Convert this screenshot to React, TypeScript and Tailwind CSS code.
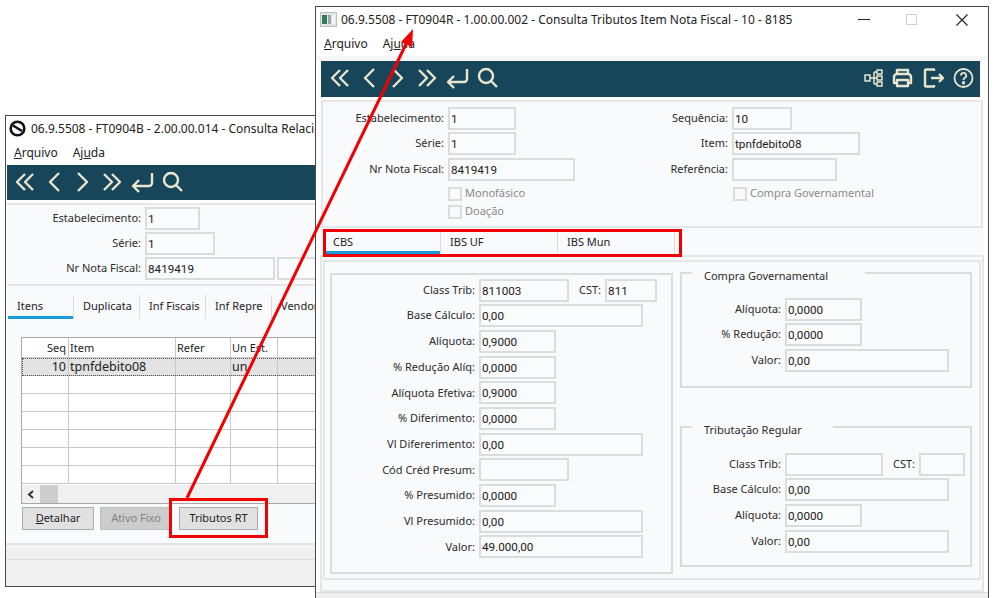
import type { ReactNode } from 'react';

const ICON = '#e9e6cf';

const ToolIcon = ({ w = 22, children }: { w?: number; children: ReactNode }) => (
  <svg
    width={w}
    height="24"
    viewBox={`0 0 ${w} 24`}
    fill="none"
    stroke={ICON}
    strokeWidth="2.4"
    strokeLinejoin="round"
    className="shrink-0"
  >
    {children}
  </svg>
);

const NavIcons = () => (
  <>
    <ToolIcon w={19}>
      <path d="M10 4 2 12l8 8M18 4l-8 8 8 8" />
    </ToolIcon>
    <span className="w-[13px]" />
    <ToolIcon w={14}>
      <path d="M12 3 3 12l9 9" />
    </ToolIcon>
    <span className="w-[15px]" />
    <ToolIcon w={14}>
      <path d="m2 3 9 9-9 9" />
    </ToolIcon>
    <span className="w-[12px]" />
    <ToolIcon w={20}>
      <path d="m2 4 8 8-8 8M10 4l8 8-8 8" />
    </ToolIcon>
    <span className="w-[8px]" />
    <ToolIcon w={24}>
      <path d="M22 3v10a3 3 0 0 1-3 3H3M9 10l-6 6 6 6" />
    </ToolIcon>
    <span className="w-[8px]" />
    <ToolIcon w={21}>
      <circle cx="9" cy="10" r="7" />
      <path d="m14 15 6 6" />
    </ToolIcon>
  </>
);

const Input = ({ value = '', className }: { value?: string; className: string }) => (
  <div
    className={`h-[23px] shrink-0 overflow-hidden border-2 border-[#dcdcdc] bg-[#fafbfd] pl-[1px] font-['Roboto',sans-serif] text-[11.7px] leading-[20px] text-[#1a1a1a] ${className}`}
  >
    {value}
  </div>
);

const Row = ({
  label,
  labelClass,
  children,
}: {
  label: string;
  labelClass: string;
  children: ReactNode;
}) => (
  <div className="flex h-[22px] items-center">
    <span className={`shrink-0 pr-1 text-right text-[11px] text-[#2b2b2b] ${labelClass}`}>{label}</span>
    {children}
  </div>
);

const Check = ({ label }: { label: string }) => (
  <div className="flex h-[14px] items-center">
    <span className="h-[14px] w-[14px] border-2 border-[#dcdcdc]" />
    <span className="ml-[3px] text-[11px] text-[#8a8a8a]">{label}</span>
  </div>
);

const Mnemonic = ({ before, ch, after }: { before: string; ch: string; after: string }) => (
  <span>
    {before}
    <span className="underline">{ch}</span>
    {after}
  </span>
);

const MenuBar = ({ className }: { className: string }) => (
  <div className={`flex h-[24px] shrink-0 items-center gap-[15px] bg-white text-[12px] text-[#222] ${className}`}>
    <Mnemonic before="" ch="A" after="rquivo" />
    <Mnemonic before="Aj" ch="u" after="da" />
  </div>
);

const LeftGridRow = ({
  cells,
  selected,
  header,
}: {
  cells: string[];
  selected?: boolean;
  header?: boolean;
}) => (
  <div
    className={`flex shrink-0 border-b border-[#c8c8c8] ${
      header ? 'h-[20px] text-[11px] leading-[20px]' : 'h-[18px] text-[12.5px] leading-[17px]'
    } ${selected ? 'bg-[#e3e3e3] outline-1 -outline-offset-1 outline-dotted outline-[#555]' : ''}`}
  >
    <div className="w-[47px] shrink-0 border-r border-[#c8c8c8] pr-[2px] text-right">{cells[0]}</div>
    <div className="w-[107px] shrink-0 border-r border-[#c8c8c8] pl-[1px]">{cells[1]}</div>
    <div className="w-[55px] shrink-0 border-r border-[#c8c8c8] pl-[1px]">{cells[2]}</div>
    <div className="w-[47px] shrink-0 border-r border-[#c8c8c8] pl-[1px]">{cells[3]}</div>
  </div>
);

const LeftWindow = () => (
  <div className="absolute left-[5px] top-[115px] flex h-[472px] w-[320px] flex-col overflow-hidden border border-[#4a4a4a] bg-white">
    <div className="flex h-[25px] shrink-0 items-center pl-[3px] text-[12px] whitespace-nowrap text-[#222]">
      <svg width="17" height="17" viewBox="0 0 17 17" fill="none" className="mr-[5px] shrink-0">
        <circle cx="8.5" cy="8.5" r="6.8" stroke="#111" strokeWidth="2.6" />
        <path d="M4 5.5 13 11" stroke="#111" strokeWidth="2.6" />
      </svg>
      06.9.5508 - FT0904B - 2.00.00.014 - Consulta Relacionamento
    </div>
    <MenuBar className="pl-[8px]" />
    <div className="ml-[1px] flex h-[35px] shrink-0 items-center bg-[#17465a] pb-[2px] pl-[8px]">
      <NavIcons />
    </div>
    <div className="mx-[1px] mt-[3px] flex flex-1 flex-col bg-[#f9fafc]">
      <div className="flex h-[83px] shrink-0 flex-col gap-[3px] border-y-2 border-[#e6e6e6] pt-[2px]">
        <Row label="Estabelecimento:" labelClass="w-[138px]">
          <Input value="1" className="w-[55px]" />
        </Row>
        <Row label="Série:" labelClass="w-[138px]">
          <Input value="1" className="w-[70px]" />
        </Row>
        <Row label="Nr Nota Fiscal:" labelClass="w-[138px]">
          <Input value="8419419" className="w-[130px]" />
          <Input className="ml-[2px] w-[60px]" />
        </Row>
      </div>
      <div className="ml-[1px] flex h-[33px] shrink-0 items-end text-[11px] text-[#222]">
        {['Itens', 'Duplicata', 'Inf Fiscais', 'Inf Repre', 'Vendor'].map((tab, i) => (
          <div
            key={tab}
            className="relative h-[24px] w-[66px] shrink-0 overflow-hidden border-r border-[#dcdcdc] pl-[9px] pt-[3px] leading-[16px] whitespace-nowrap"
          >
            {tab}
            {i === 0 && <span className="absolute bottom-0 left-0 h-[3px] w-full bg-[#1a9ad8]" />}
          </div>
        ))}
      </div>
      <div className="ml-[14px] mt-[18px] flex h-[167px] w-[300px] shrink-0 flex-col border border-[#a8a8a8] bg-white text-[#222]">
        <LeftGridRow header cells={['Seq', 'Item', 'Refer', 'Un Est.']} />
        <LeftGridRow cells={['10', 'tpnfdebito08', '', 'un']} selected />
        {[0, 1, 2, 3, 4, 5].map((n) => (
          <LeftGridRow key={n} cells={['', '', '', '']} />
        ))}
        <div className="mt-[1px] flex flex-1 items-center bg-[#f0f0f0]">
          <svg width="18" height="17" viewBox="0 0 18 17" fill="none">
            <path d="M11 5 7 8.5l4 3.5" stroke="#333" strokeWidth="2" />
          </svg>
          <span className="h-full w-[18px] bg-[#cdcdcd]" />
        </div>
      </div>
      <div className="ml-[15px] mt-[3px] flex gap-[6px] text-[11px]">
        <div className="flex h-[23px] w-[72px] items-center justify-center border border-[#adadad] bg-[#e1e1e1] text-[#222]">
          <Mnemonic before="" ch="D" after="etalhar" />
        </div>
        <div className="flex h-[23px] w-[72px] items-center justify-center border border-[#bfbfbf] bg-[#cccccc] text-[#838383]">
          Ativo Fixo
        </div>
        <div className="ml-[1px] flex h-[23px] w-[79px] items-center justify-center border border-[#adadad] bg-[#e1e1e1] text-[#222]">
          Tributos RT
        </div>
      </div>
    </div>
    <div className="h-[6px] shrink-0 border-t-2 border-[#e2e2e2] bg-[#f4f4f4]" />
    <div className="h-[10px] shrink-0 bg-[#f0f0f0]" />
    <div className="h-[27px] shrink-0 border-t border-[#dcdcdc] bg-[#f0f0f0]" />
  </div>
);

const Fieldset = ({
  legend,
  legendClass,
  className,
  children,
}: {
  legend: string;
  legendClass: string;
  className: string;
  children: ReactNode;
}) => (
  <fieldset className={`border-2 border-[#dcdcdc] ${className}`}>
    <legend className={`ml-[10px] h-[16px] pl-[12px] text-[11px] leading-[16px] text-[#2b2b2b] ${legendClass}`}>
      <span className="relative top-[3px]">{legend}</span>
    </legend>
    {children}
  </fieldset>
);

const RightWindow = () => (
  <div className="absolute left-[315px] top-[6px] flex h-[600px] w-[674px] flex-col border border-[#4a4a4a] bg-white">
    <div className="flex h-[25px] shrink-0 items-center pl-[4px] text-[12px] whitespace-nowrap text-[#222]">
      <svg width="17" height="15" viewBox="0 0 17 15" className="mr-[4px] shrink-0">
        <rect x="0.5" y="0.5" width="16" height="14" fill="#e4e4e4" stroke="#bdbdbd" />
        <rect x="2" y="3" width="5" height="9" fill="#2f7d5c" />
        <rect x="8" y="3" width="3" height="9" fill="#9aa7ad" />
        <rect x="12" y="3" width="3" height="9" fill="#f5f5f5" />
      </svg>
      06.9.5508 - FT0904R - 1.00.00.002 - Consulta Tributos Item Nota Fiscal - 10 - 8185
      <span className="flex-1" />
      <span className="h-[1px] w-[12px] bg-[#222]" />
      <span className="ml-[36px] h-[11px] w-[11px] border border-[#cfcfcf]" />
      <svg width="14" height="14" viewBox="0 0 14 14" className="ml-[38px] mr-[19px]" stroke="#222" strokeWidth="1.1">
        <path d="m1.5 1.5 11 11M12.5 1.5l-11 11" />
      </svg>
    </div>
    <MenuBar className="pl-[8px]" />
    <div className="h-[5px] shrink-0 bg-[#f4f6f8]" />
    <div className="ml-[5px] mr-[8px] flex h-[36px] shrink-0 items-center bg-[#17465a] pb-[3px] pl-[9px] pr-[6px]">
      <NavIcons />
      <span className="flex-1" />
      <ToolIcon w={20}>
        <g strokeWidth="1.5">
          <rect x="1" y="9" width="5" height="6" />
          <rect x="13" y="4" width="5" height="4" />
          <rect x="13" y="10" width="5" height="4" />
          <rect x="13" y="16" width="5" height="4" />
          <path d="M6 12h4M10 6v12M10 6h3M10 12h3M10 18h3" />
        </g>
      </ToolIcon>
      <span className="w-[8px]" />
      <ToolIcon w={21}>
        <path d="M5 8V4h11v4M5 17H2v-6a3 3 0 0 1 3-3h11a3 3 0 0 1 3 3v6h-3M5 14h11v6H5z" />
      </ToolIcon>
      <span className="w-[10px]" />
      <ToolIcon w={22}>
        <path d="M11 5V3.5H3a1 1 0 0 0-1 1v15a1 1 0 0 0 1 1h8V19M8 12h12M16 8l4 4-4 4" />
      </ToolIcon>
      <span className="w-[8px]" />
      <ToolIcon w={21}>
        <g strokeWidth="1.8">
          <circle cx="10.5" cy="12" r="9" />
          <path d="M8 9.5a2.6 2.6 0 1 1 3.8 2.3c-.9.5-1.3 1-1.3 2.2" />
          <path d="M10 16h1v1.6h-1z" />
        </g>
      </ToolIcon>
    </div>
    <div className="mx-[5px] mt-[3px] flex flex-1 flex-col bg-[#f9fafc]">
      <div className="flex h-[128px] shrink-0 border-y-2 border-[#e6e6e6] border-x-2 pt-[5px]">
        <div className="flex w-[278px] shrink-0 flex-col gap-[3.5px]">
          <Row label="Estabelecimento:" labelClass="w-[125px]">
            <Input value="1" className="w-[68px]" />
          </Row>
          <Row label="Série:" labelClass="w-[125px]">
            <Input value="1" className="w-[68px]" />
          </Row>
          <Row label="Nr Nota Fiscal:" labelClass="w-[125px]">
            <Input value="8419419" className="w-[127px]" />
          </Row>
          <div className="ml-[125px] mt-[3px] flex flex-col gap-[4px]">
            <Check label="Monofásico" />
            <Check label="Doação" />
          </div>
        </div>
        <div className="flex flex-col gap-[3.5px]">
          <Row label="Sequência:" labelClass="w-[131px]">
            <Input value="10" className="w-[60px]" />
          </Row>
          <Row label="Item:" labelClass="w-[131px]">
            <Input value="tpnfdebito08" className="w-[128px]" />
          </Row>
          <Row label="Referência:" labelClass="w-[131px]">
            <Input className="w-[105px]" />
          </Row>
          <div className="ml-[132px] mt-[3px]">
            <Check label="Compra Governamental" />
          </div>
        </div>
      </div>
      <div className="ml-[3px] flex h-[27px] shrink-0 items-end text-[11px] text-[#222]">
        {['CBS', 'IBS UF', 'IBS Mun'].map((tab, i) => (
          <div key={tab} className="relative h-[24px] w-[117px] shrink-0 border-r border-[#dcdcdc] pl-[9px] pt-[2px] leading-[17px]">
            {tab}
            {i === 0 && <span className="absolute bottom-[1px] left-0 h-[3px] w-full bg-[#1a9ad8]" />}
          </div>
        ))}
      </div>
      <div className="-mx-[1px] flex-1 border-2 border-[#e6e6e6] pt-[3px] pb-[4px] px-[1px]">
        <div className="flex h-[320px] gap-[7px] border-2 border-[#e6e6e6] pl-[5px]">
          <div className="mt-[11px] flex h-[301px] w-[343px] shrink-0 flex-col gap-[3.7px] border-2 border-[#dcdcdc] pt-[4px]">
            <Row label="Class Trib:" labelClass="w-[147px]">
              <Input value="811003" className="w-[90px]" />
              <span className="ml-[10px] pr-1 text-[11px] text-[#2b2b2b]">CST:</span>
              <Input value="811" className="w-[52px]" />
            </Row>
            <Row label="Base Cálculo:" labelClass="w-[147px]">
              <Input value="0,00" className="w-[164px]" />
            </Row>
            <Row label="Alíquota:" labelClass="w-[147px]">
              <Input value="0,9000" className="w-[77px]" />
            </Row>
            <Row label="% Redução Alíq:" labelClass="w-[147px]">
              <Input value="0,0000" className="w-[77px]" />
            </Row>
            <Row label="Alíquota Efetiva:" labelClass="w-[147px]">
              <Input value="0,9000" className="w-[77px]" />
            </Row>
            <Row label="% Diferimento:" labelClass="w-[147px]">
              <Input value="0,0000" className="w-[77px]" />
            </Row>
            <Row label="Vl Difererimento:" labelClass="w-[147px]">
              <Input value="0,00" className="w-[164px]" />
            </Row>
            <Row label="Cód Créd Presum:" labelClass="w-[147px]">
              <Input className="w-[90px]" />
            </Row>
            <Row label="% Presumido:" labelClass="w-[147px]">
              <Input value="0,0000" className="w-[77px]" />
            </Row>
            <Row label="Vl Presumido:" labelClass="w-[147px]">
              <Input value="0,00" className="w-[164px]" />
            </Row>
            <Row label="Valor:" labelClass="w-[147px]">
              <Input value="49.000,00" className="w-[164px]" />
            </Row>
          </div>
          <div className="mt-[3px] flex w-[292px] shrink-0 flex-col gap-[31px]">
            <Fieldset legend="Compra Governamental" legendClass="pr-[37px]" className="h-[123px] pt-[17px]">
              <div className="flex flex-col gap-[3.7px]">
                <Row label="Alíquota:" labelClass="w-[103px]">
                  <Input value="0,0000" className="w-[77px]" />
                </Row>
                <Row label="% Redução:" labelClass="w-[103px]">
                  <Input value="0,0000" className="w-[77px]" />
                </Row>
                <Row label="Valor:" labelClass="w-[103px]">
                  <Input value="0,00" className="w-[164px]" />
                </Row>
              </div>
            </Fieldset>
            <Fieldset legend="Tributação Regular" legendClass="pr-[31px]" className="h-[148px] pt-[18px]">
              <div className="flex flex-col gap-[3.7px]">
                <Row label="Class Trib:" labelClass="w-[103px]">
                  <Input className="w-[98px]" />
                  <span className="ml-[10px] pr-1 text-[11px] text-[#2b2b2b]">CST:</span>
                  <Input className="w-[46px]" />
                </Row>
                <Row label="Base Cálculo:" labelClass="w-[103px]">
                  <Input value="0,00" className="w-[164px]" />
                </Row>
                <Row label="Alíquota:" labelClass="w-[103px]">
                  <Input value="0,0000" className="w-[77px]" />
                </Row>
                <Row label="Valor:" labelClass="w-[103px]">
                  <Input value="0,00" className="w-[164px]" />
                </Row>
              </div>
            </Fieldset>
          </div>
        </div>
      </div>
    </div>
    <div className="h-[13px] shrink-0 border-t border-[#dcdcdc] bg-[#f0f0f0]" />
  </div>
);

const App = () => (
  <div
    className="relative h-[598px] w-[997px] overflow-hidden bg-white"
    style={{ fontFamily: '"Noto Sans", "Open Sans", sans-serif' }}
  >
    <LeftWindow />
    <RightWindow />
    {/* callouts drawn on top of the windows */}
    <div className="absolute left-[169px] top-[498px] h-[40px] w-[99px] border-[3px] border-[#f00000]" />
    <div className="absolute left-[323px] top-[229px] h-[28px] w-[359px] border-[3px] border-[#f00000]" />
    <svg width="997" height="598" className="absolute left-0 top-0">
      <path d="M187 498 407 42" stroke="#f00000" strokeWidth="3" />
      <path d="M413 29 401 42l11 5z" fill="#f00000" />
    </svg>
  </div>
);

export default App;
